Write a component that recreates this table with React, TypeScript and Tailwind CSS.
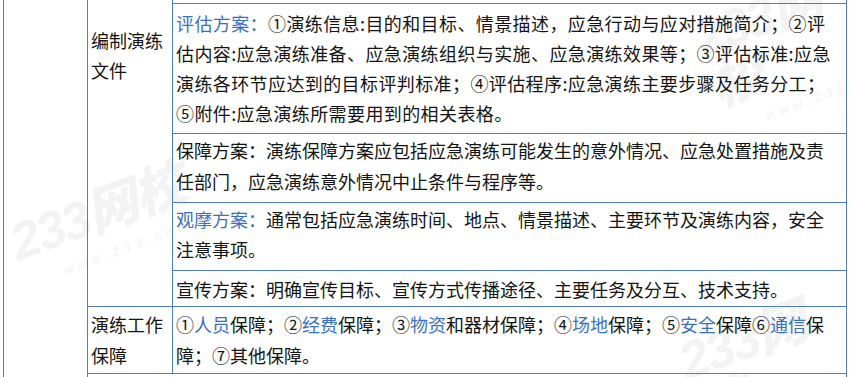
import React from "react";

const Blue = ({ children }: { children: React.ReactNode }) => (
  <span className="text-[#3b6fc6]">{children}</span>
);

function Watermark({ className }: { className: string }) {
  return (
    <div aria-hidden className={`absolute pointer-events-none select-none -rotate-[20deg] text-[#f3f3f3] ${className}`}>
      <div className="text-[52px] font-black italic leading-none tracking-[-2px] font-['Liberation_Sans','Noto_Sans_CJK_SC',sans-serif]">
        233网校
      </div>
      <div className="text-[13px] italic tracking-[5px] ml-[40px] mt-[2px] font-['Liberation_Sans',sans-serif]">
        www.233.com
      </div>
    </div>
  );
}

export default function App() {
  const cell = "border-[#4f7cc4]";
  return (
    <div className="relative w-[851px] h-[377px] overflow-hidden bg-white text-[18px] leading-[30px] text-[#141414] font-['Noto_Sans_CJK_SC','Noto_Sans_CJK_JP',sans-serif]">
      <Watermark className="left-[12px] top-[186px]" />
      <Watermark className="left-[705px] top-[-18px]" />
      <Watermark className="left-[690px] top-[305px]" />

      <div className="relative flex h-full w-[847px] pl-[3px]">
        {/* first column, merged and empty */}
        <div className={`w-[85px] h-full border-l border-r ${cell}`} />

        <div className="flex flex-col w-[759px] h-full">
          {/* 编制演练文件 */}
          <div className="flex">
            <div className={`w-[85px] shrink-0 border-r border-b ${cell} pl-[3px] pt-[25px]`}>
              编制演练
              <br />
              文件
            </div>
            <div className={`flex-1 flex flex-col pt-[3px] border-r ${cell} whitespace-nowrap`}>
              <div className={`border-t border-b ${cell} pl-[3px] pt-[4px] pb-[5px] tracking-[0.4px]`}>
                <div>
                  <Blue>评估方案：</Blue>①演练信息:目的和目标、情景描述，应急行动与应对措施简介；②评
                </div>
                <div>估内容:应急演练准备、应急演练组织与实施、应急演练效果等；③评估标准:应急</div>
                <div>演练各环节应达到的目标评判标准；④评估程序:应急演练主要步骤及任务分工；</div>
                <div>⑤附件:应急演练所需要用到的相关表格。</div>
              </div>
              <div className={`border-b ${cell} pl-[3px] pt-[1px] pb-[5px] leading-[31px]`}>
                <div>保障方案：演练保障方案应包括应急演练可能发生的意外情况、应急处置措施及责</div>
                <div>任部门，应急演练意外情况中止条件与程序等。</div>
              </div>
              <div className={`border-b ${cell} pl-[3px] pt-[1px] pb-[6px]`}>
                <div>
                  <Blue>观摩方案：</Blue>通常包括应急演练时间、地点、情景描述、主要环节及演练内容，安全
                </div>
                <div>注意事项。</div>
              </div>
              <div className={`border-b ${cell} pl-[3px] pt-[3px] pb-[2px]`}>
                宣传方案：明确宣传目标、宣传方式传播途径、主要任务及分互、技术支持。
              </div>
            </div>
          </div>

          {/* 演练工作保障 */}
          <div className="flex leading-[31px]">
            <div className={`w-[85px] shrink-0 border-r border-b ${cell} pl-[3px] pt-[2px] pb-[2px]`}>
              演练工作
              <br />
              保障
            </div>
            <div className={`flex-1 border-r border-b ${cell} pl-[3px] pt-[2px] pb-[2px] whitespace-nowrap`}>
              <div>
                ①<Blue>人员</Blue>保障；②<Blue>经费</Blue>保障；③<Blue>物资</Blue>和器材保障；④<Blue>场地</Blue>保障；⑤<Blue>安全</Blue>保障⑥<Blue>通信</Blue>保
              </div>
              <div>障；⑦其他保障。</div>
            </div>
          </div>

          <div className={`flex-1 border-r ${cell}`} />
        </div>
      </div>
    </div>
  );
}
